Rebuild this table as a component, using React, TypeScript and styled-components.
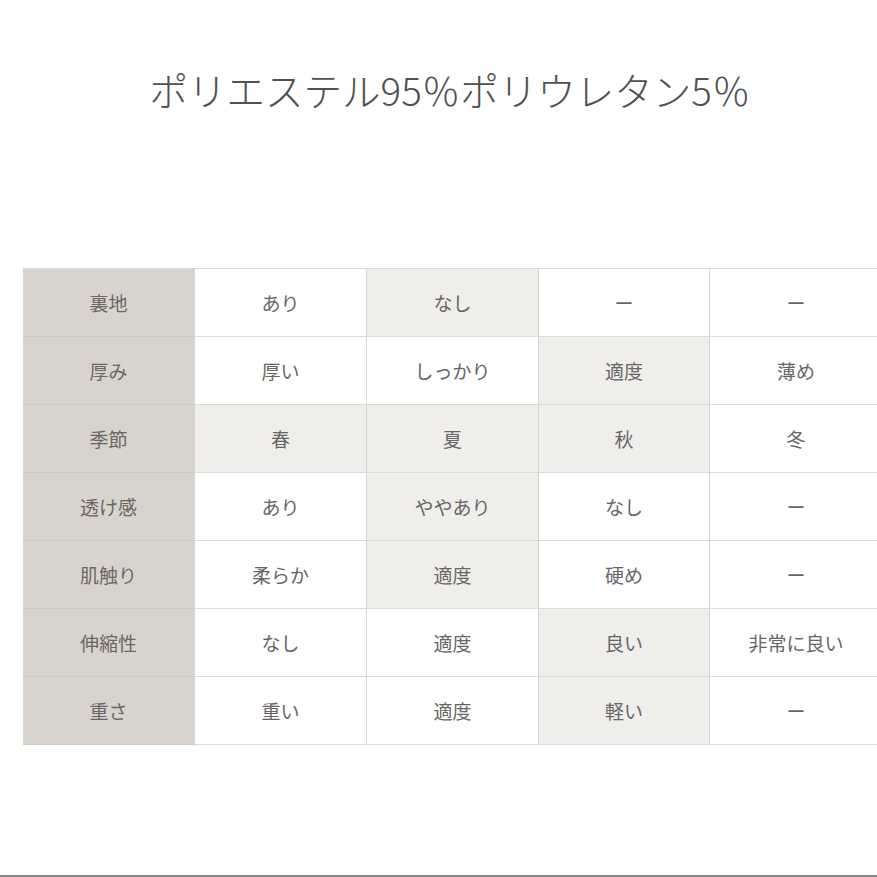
import React from "react";
import styled, { createGlobalStyle } from "styled-components";

const Global = createGlobalStyle`
  html, body { margin: 0; padding: 0; background: #fff; overflow: hidden; }
  body { font-family: "Noto Sans CJK JP", "Noto Sans", sans-serif; }
`;

const Page = styled.div`
  box-sizing: border-box;
  width: 877px;
  height: 877px;
  border-bottom: 2px solid #858585;
  padding: 65px 0 0 23px;
  overflow: hidden;
`;

const Inner = styled.div`
  width: 860px;
`;

const Title = styled.h1`
  margin: 0;
  text-align: center;
  font-size: 38.5px;
  line-height: 48px;
  font-weight: 300;
  color: #505050;
  padding-right: 6px;
`;

const Grid = styled.div`
  margin-top: 155px;
  display: grid;
  grid-template-columns: 172px 172px 172px 171px 173px;
  grid-template-rows: repeat(7, 68px);
  border-top: 1px solid #dcdcdc;
`;

const Cell = styled.div<{ $kind: "head" | "on" | "off" }>`
  display: flex;
  align-items: center;
  justify-content: center;
  box-sizing: border-box;
  font-size: 19px;
  color: ${(p) => (p.$kind === "head" ? "#6a6763" : "#666")};
  background: ${(p) =>
    p.$kind === "head" ? "#d9d3cd" : p.$kind === "on" ? "#f0eeeb" : "#fff"};
  border-bottom: 1px solid ${(p) => (p.$kind === "head" ? "#cfc9c3" : "#dadada")};
  border-right: 1px solid #d6d6d6;
  padding-bottom: 1px;
`;

type Row = { label: string; values: string[]; on: number[] };

const rows: Row[] = [
  { label: "裏地", values: ["あり", "なし", "ー", "ー"], on: [1] },
  { label: "厚み", values: ["厚い", "しっかり", "適度", "薄め"], on: [2] },
  { label: "季節", values: ["春", "夏", "秋", "冬"], on: [0, 1, 2] },
  { label: "透け感", values: ["あり", "ややあり", "なし", "ー"], on: [1] },
  { label: "肌触り", values: ["柔らか", "適度", "硬め", "ー"], on: [1] },
  { label: "伸縮性", values: ["なし", "適度", "良い", "非常に良い"], on: [2] },
  { label: "重さ", values: ["重い", "適度", "軽い", "ー"], on: [2] },
];

export default function App() {
  return (
    <>
      <Global />
      <Page>
        <Inner>
          <Title>ポリエステル95％ポリウレタン5％</Title>
          <Grid>
            {rows.map((r) => (
              <React.Fragment key={r.label}>
                <Cell $kind="head">{r.label}</Cell>
                {r.values.map((v, i) => (
                  <Cell key={i} $kind={r.on.includes(i) ? "on" : "off"}>
                    {v}
                  </Cell>
                ))}
              </React.Fragment>
            ))}
          </Grid>
        </Inner>
      </Page>
    </>
  );
}
